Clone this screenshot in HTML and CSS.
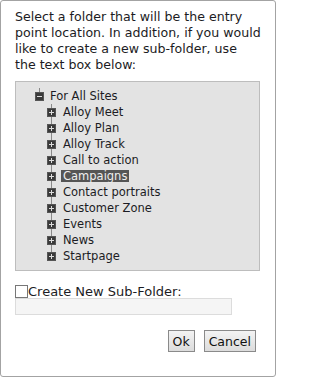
FILE: index.html
```html
<!DOCTYPE html>
<html>
<head>
<meta charset="utf-8">
<link rel="stylesheet" href="styles.css">
</head>
<body>
<div class="dialog">
  <p class="intro">Select a folder that will be the entry<br>point location. In addition, if you would<br>like to create a new sub-folder, use<br>the text box below:</p>
  <div class="tree">
    <div class="node root">
      <span class="icon minus"></span><span class="label">For All Sites</span>
    </div>
    <ul class="children">
      <li><span class="icon plus"></span><span class="label">Alloy Meet</span></li>
      <li><span class="icon plus"></span><span class="label">Alloy Plan</span></li>
      <li><span class="icon plus"></span><span class="label">Alloy Track</span></li>
      <li><span class="icon plus"></span><span class="label">Call to action</span></li>
      <li><span class="icon plus"></span><span class="label selected">Campaigns</span></li>
      <li><span class="icon plus"></span><span class="label">Contact portraits</span></li>
      <li><span class="icon plus"></span><span class="label">Customer Zone</span></li>
      <li><span class="icon plus"></span><span class="label">Events</span></li>
      <li><span class="icon plus"></span><span class="label">News</span></li>
      <li class="last"><span class="icon plus"></span><span class="label">Startpage</span></li>
    </ul>
  </div>
  <label class="create"><span class="check"></span>Create New Sub-Folder:</label>
  <div class="field"></div>
  <div class="buttons">
    <button class="btn">Ok</button>
    <button class="btn">Cancel</button>
  </div>
</div>
</body>
</html>
```

FILE: styles.css
```css
html, body {
  margin: 0;
  padding: 0;
  background: #fff;
}
.dialog {
  box-sizing: border-box;
  width: 276px;
  height: 377px;
  border: 1px solid #a3a3a3;
  border-radius: 3px;
  padding: 8px 0 0 14px;
  font-family: "DejaVu Sans", Verdana, sans-serif;
  font-size: 12px;
  line-height: 16px;
  color: #1c1c24;
}
.intro {
  margin: 0;
  width: 256px;
  font-size: 12.6px;
  white-space: nowrap;
}
.tree {
  margin-top: 8px;
  box-sizing: border-box;
  width: 245px;
  height: 190px;
  background: #e3e3e3;
  border: 1px solid #bdbdbd;
  padding: 6px 0 0 19px;
  font-size: 11.5px;
}
.node, .children li {
  display: flex;
  align-items: center;
  height: 16px;
  position: relative;
}
.icon {
  width: 9px;
  height: 9px;
  background: #3a3a3a;
  border: 1px solid #555;
  box-sizing: border-box;
  position: relative;
  flex: none;
}
.icon::before {
  content: "";
  position: absolute;
  left: 1px;
  top: 3px;
  width: 5px;
  height: 1px;
  background: #ddd;
}
.plus::after {
  content: "";
  position: absolute;
  left: 3px;
  top: 1px;
  width: 1px;
  height: 5px;
  background: #ddd;
}
.root .icon::after {
  content: "";
  position: absolute;
  left: 3px;
  top: -5px;
  width: 1px;
  height: 4px;
  background: #888;
}
.root .label {
  margin-left: 6px;
}
.children {
  list-style: none;
  margin: 0;
  padding: 0 0 0 12px;
  position: relative;
}
.children::before {
  content: "";
  position: absolute;
  left: 16px;
  top: 0;
  bottom: 8px;
  width: 1px;
  background: #8a8a8a;
}
.children .icon {
  z-index: 1;
}
.children .label {
  margin-left: 5px;
  padding: 0 2px;
  line-height: 12px;
}
.selected {
  background: #555;
  color: #eee;
}
.create {
  display: flex;
  align-items: center;
  margin-top: 14px;
  height: 13px;
  font-size: 13px;
}
.check {
  width: 13px;
  height: 13px;
  box-sizing: border-box;
  border: 1px solid #777;
  background: #fff;
  flex: none;
}
.field {
  margin-top: 0;
  box-sizing: border-box;
  width: 217px;
  height: 17px;
  background: #f5f5f5;
  border: 1px solid #dcdcdc;
}
.buttons {
  display: flex;
  justify-content: flex-end;
  gap: 9px;
  margin-top: 15px;
  padding-right: 19px;
}
.btn {
  box-sizing: border-box;
  height: 22px;
  padding: 0 4px;
  font-family: "DejaVu Sans", Verdana, sans-serif;
  font-size: 12.5px;
  color: #111;
  background: linear-gradient(#f3f3f3, #dcdcdc);
  border: 1px solid #8a8a8a;
  border-radius: 0;
}
```
